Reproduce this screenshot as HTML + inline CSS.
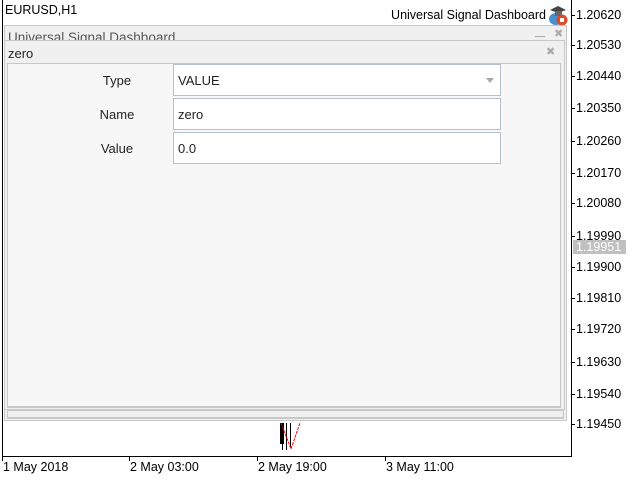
<!DOCTYPE html>
<html><head><style>
*{margin:0;padding:0;box-sizing:border-box}
body{width:640px;height:480px;background:#fff;position:relative;overflow:hidden;font-family:"Liberation Sans",sans-serif;font-size:12px;color:#000}
.a{position:absolute}
.p{position:absolute;left:576px;font-size:12.5px;line-height:12px;font-family:"Liberation Sans",sans-serif}
.t{position:absolute;left:571px;width:4px;height:1px;background:#000}
.inp{position:absolute;left:173px;width:328px;height:32px;background:#fff;border:1px solid #b4c0cc;font-size:13px;padding-left:4px;line-height:32px;color:#222}
.lab{position:absolute;width:100px;left:67px;text-align:center;font-size:13px;color:#222}
.x{position:absolute;top:460px;font-size:12.5px}
</style></head><body>
<div class="a" style="left:2px;top:0;width:1px;height:457px;background:#000"></div>
<div class="a" style="left:571px;top:0;width:1px;height:457px;background:#000"></div>
<div class="a" style="left:2px;top:456px;width:570px;height:1px;background:#000"></div>
<div class="a" style="left:5px;top:3px;font-size:12.5px">EURUSD,H1</div>
<div class="a" style="right:94px;top:8px;font-size:12.5px;white-space:nowrap">Universal Signal Dashboard</div>
<svg class="a" style="left:547px;top:4px" width="22" height="22"><ellipse cx="9" cy="15" rx="7" ry="6" fill="#4a90d0"/><path d="M3 6 L11 2 L19 6 L11 9Z" fill="#444"/><rect x="8" y="7" width="7" height="5" fill="#666"/><circle cx="15" cy="16" r="5.5" fill="#e04a2a"/><rect x="13" y="14" width="4" height="4" fill="#fff"/></svg>
<!-- outer panel -->
<div class="a" style="left:4px;top:25px;width:563px;height:396px;background:#f0f0f0;border:1px solid #c8c8c8"></div>
<div class="a" style="left:8px;top:30px;font-size:13.5px;color:#555">Universal Signal Dashboard</div>
<div class="a" style="left:535px;top:36px;width:10px;height:1px;background:#aaa"></div>
<div class="a" style="left:554px;top:27px;color:#aaa;font-size:11px">✖</div>
<div class="a" style="left:7px;top:410px;width:557px;height:9px;border:1px solid #c8c8c8;border-bottom-width:2px"></div>
<!-- inner dialog -->
<div class="a" style="left:4px;top:40px;width:561px;height:370px;background:#f0f0f0;border:1px solid #c8c8c8"></div>
<div class="a" style="left:8px;top:46px;font-size:13px;color:#222">zero</div>
<div class="a" style="left:546px;top:45px;color:#aaa;font-size:11px">✖</div>
<div class="a" style="left:7px;top:63px;width:554px;height:345px;background:#f7f7f7;border:1px solid #c8c8c8;border-bottom-width:2px"></div>
<div class="lab" style="top:73px">Type</div>
<div class="lab" style="top:107px">Name</div>
<div class="lab" style="top:141px">Value</div>
<div class="inp" style="top:64px">VALUE<span style="position:absolute;right:6px;top:13px;width:0;height:0;border-left:4px solid transparent;border-right:4px solid transparent;border-top:5px solid #aaa"></span></div>
<div class="inp" style="top:98px">zero</div>
<div class="inp" style="top:132px">0.0</div>
<!-- candles -->
<div class="a" style="left:280px;top:423px;width:4px;height:21px;background:#000"></div>
<div class="a" style="left:282px;top:423px;width:1px;height:27px;background:#000"></div>
<div class="a" style="left:286px;top:423px;width:1px;height:27px;background:#000"></div>
<div class="a" style="left:290px;top:423px;width:1px;height:24px;background:#000"></div>
<svg class="a" style="left:270px;top:420px" width="40" height="35"><path d="M11 3 L21 29 L30 3" stroke="red" stroke-width="1" fill="none" stroke-dasharray="3,1"/></svg>
<!-- price axis -->
<div class="t" style="top:15px"></div><div class="p" style="top:9px">1.20620</div>
<div class="t" style="top:45px"></div><div class="p" style="top:39px">1.20530</div>
<div class="t" style="top:76px"></div><div class="p" style="top:70px">1.20440</div>
<div class="t" style="top:108px"></div><div class="p" style="top:102px">1.20350</div>
<div class="t" style="top:141px"></div><div class="p" style="top:135px">1.20260</div>
<div class="t" style="top:173px"></div><div class="p" style="top:167px">1.20170</div>
<div class="t" style="top:203px"></div><div class="p" style="top:197px">1.20080</div>
<div class="t" style="top:236px"></div><div class="p" style="top:230px">1.19990</div>
<div class="a" style="left:573px;top:240px;width:53px;height:14px;background:#c0c0c0"></div><div class="p" style="top:241px;color:#fff">1.19951</div>
<div class="t" style="top:267px"></div><div class="p" style="top:261px">1.19900</div>
<div class="t" style="top:298px"></div><div class="p" style="top:292px">1.19810</div>
<div class="t" style="top:329px"></div><div class="p" style="top:323px">1.19720</div>
<div class="t" style="top:362px"></div><div class="p" style="top:356px">1.19630</div>
<div class="t" style="top:394px"></div><div class="p" style="top:388px">1.19540</div>
<div class="t" style="top:424px"></div><div class="p" style="top:418px">1.19450</div>
<!-- time axis -->
<div class="a" style="left:2px;top:457px;width:1px;height:4px;background:#000"></div>
<div class="a" style="left:129px;top:457px;width:1px;height:4px;background:#000"></div>
<div class="a" style="left:257px;top:457px;width:1px;height:4px;background:#000"></div>
<div class="a" style="left:385px;top:457px;width:1px;height:4px;background:#000"></div>
<div class="x" style="left:3px">1 May 2018</div>
<div class="x" style="left:130px">2 May 03:00</div>
<div class="x" style="left:258px">2 May 19:00</div>
<div class="x" style="left:386px">3 May 11:00</div>
</body></html>
